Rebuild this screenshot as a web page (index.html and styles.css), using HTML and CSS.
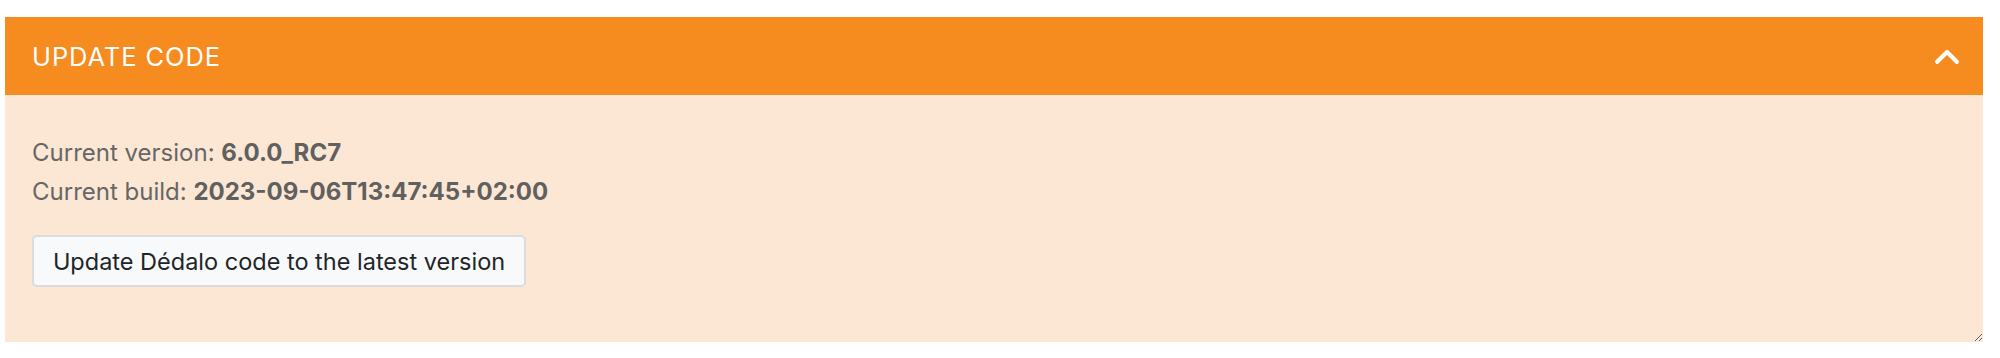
FILE: index.html
```html
<!DOCTYPE html>
<html lang="en">
<head>
    <meta charset="UTF-8">
    <meta name="viewport" content="width=device-width, initial-scale=1.0">
    <title>Update code</title>
    <link rel="stylesheet" href="styles.css">
</head>
<body>
    <div class="panel">
        <div class="panel-header">
            <span class="panel-title">UPDATE CODE</span>
            <svg class="toggle" width="24" height="15" viewBox="0 0 24 15">
                <polyline points="2.2,12.8 12,3 21.8,12.8" fill="none" stroke="#fff" stroke-width="4.2" stroke-linecap="round" stroke-linejoin="round"/>
            </svg>
        </div>
        <div class="panel-body">
            <p class="info">Current version: <b>6.0.0_RC7</b></p>
            <p class="info">Current build: <b>2023-09-06T13:47:45+02:00</b></p>
            <button class="update-button">Update Dédalo code to the latest version</button>
        </div>
    </div>
</body>
</html>
```

FILE: styles.css
```css
body {
    margin: 17px 17px 0 5px;
    font-family: Inter, "Liberation Sans", sans-serif;
    background-color: #fff;
}

.panel-header {
    height: 78px;
    background-color: #f68b1f;
    display: flex;
    align-items: center;
    justify-content: space-between;
    padding: 0 24px 0 27px;
}

.panel-title {
    color: #fff;
    font-size: 25.5px;
    letter-spacing: 0.9px;
}

.toggle {
    display: block;
}

.panel-body {
    height: 247px;
    box-sizing: border-box;
    background-color: #fce7d4;
    padding: 38px 27px 0 27px;
    resize: both;
    overflow: auto;
}

.info {
    margin: 0;
    color: #666;
    font-size: 24px;
    line-height: 39px;
}

.info b {
    color: #606060;
}

.update-button {
    display: block;
    margin-top: 24px;
    width: 494px;
    height: 52px;
    padding: 0;
    font-family: Inter, "Liberation Sans", sans-serif;
    font-size: 23.5px;
    color: #212529;
    background-color: #f8f9fa;
    border: 2px solid #dadcde;
    border-radius: 5px;
    cursor: pointer;
}
```
